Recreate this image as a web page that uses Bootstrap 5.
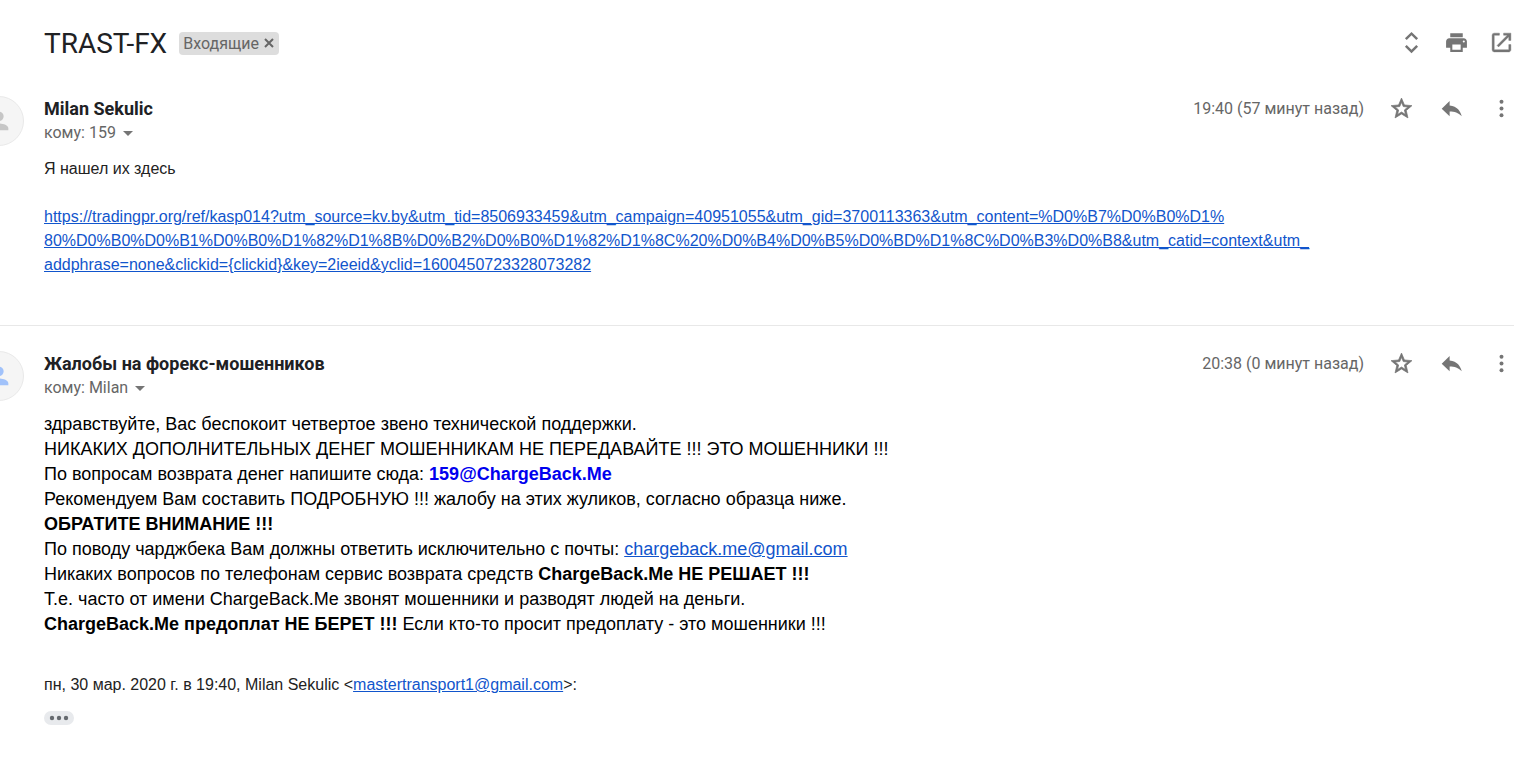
<!DOCTYPE html>
<html lang="ru">
<head>
<meta charset="utf-8">
<meta name="viewport" content="width=device-width, initial-scale=1">
<title>TRAST-FX</title>
<link href="https://cdn.jsdelivr.net/npm/bootstrap@5.3.0/dist/css/bootstrap.min.css" rel="stylesheet">
<style>
body { font-family: Roboto, "Liberation Sans", sans-serif; color: #202124; background: #fff; }
.thread { margin-left: -26px; padding-right: 18px; }
.subject-bar { padding: 24px 0 24px 70px; }
.subject { font-size: 28px; line-height: 36px; padding-top: 2px; }
.folder-tag { background: #ddd; color: #666; font-size: 16px; line-height: 23px; border-radius: 4px; padding: 0 5px 0 4px; margin-left: 12px; }
.folder-tag button { margin-left: 5px; }
.icon-btn { width: 25px; height: 25px; padding: 0; border: 0; background: none; color: #757575; display: block; }
.icon-btn svg { display: block; width: 25px; height: 25px; fill: currentColor; }
.head-tools { gap: 20px; padding-top: 6px; }
.msg-tools { gap: 25px; height: 25px; }
.message { padding: 10px 0 48px; }
.message + .message { border-top: 1px solid #e8e8e8; padding-top: 25px; }
.avatar { width: 50px; height: 50px; background: #f5f5f5; border: 1px solid #e9e9e9; color: #c6c6c6; margin-right: 20px; }
.avatar svg { width: 28px; height: 28px; fill: currentColor; }
.avatar-blue { color: #a1c2fa; }
.sender { font-size: 18px; line-height: 25px; font-weight: 700; }
.meta { font-size: 16px; line-height: 24px; color: #666; }
.caret-btn { border: 0; background: none; padding: 0; margin-left: 7px; width: 10px; height: 5px; }
.caret-btn svg { display: block; fill: #757575; }
.mail-text { font-family: "Liberation Sans", Arial, sans-serif; font-size: 16px; line-height: 24px; color: #222; }
.mail-text a { color: #15c; }
.mail-large { font-size: 18px; line-height: 25px; color: #000; }
.mail-large .contact { color: #00e; }
.quote-line { margin-top: 36px; }
.trimmed { width: 30px; height: 14px; border: 0; border-radius: 7px; background: #e8eaed; padding: 0; margin-top: 14px; }
</style>
</head>
<body class="overflow-x-hidden">
<svg class="d-none" aria-hidden="true">
<symbol id="i-star" viewBox="0 0 24 24"><path stroke="currentColor" stroke-width=".7" d="M22 9.24l-7.19-.62L12 2 9.19 8.63 2 9.24l5.46 4.73L5.82 21 12 17.27 18.18 21l-1.63-7.03L22 9.24zM12 15.4l-3.76 2.27 1-4.28-3.32-2.88 4.38-.38L12 6.1l1.71 4.04 4.38.38-3.32 2.88 1 4.28L12 15.4z"/></symbol>
<symbol id="i-reply" viewBox="0 0 24 24"><path d="M10.200 9V4.800L2.600 12.200l7.600 7.300V14.900c4.800 0 8.200 1.200 11.600 4.600C20.800 14.500 17.500 9.900 10.200 9z"/></symbol>
<symbol id="i-more" viewBox="0 0 24 24"><circle cx="12" cy="5.500" r="1.900"/><circle cx="12" cy="12" r="1.900"/><circle cx="12" cy="18.500" r="1.900"/></symbol>
<symbol id="i-person" viewBox="0 0 24 24"><path d="M12 12a4 4 0 1 0 0-8 4 4 0 0 0 0 8zm0 2c-2.670 0-8 1.340-8 4v2h16v-2c0-2.660-5.330-4-8-4z"/></symbol>
</svg>
<main class="thread">
<header class="subject-bar d-flex justify-content-between align-items-start">
  <div class="d-flex align-items-center">
    <h1 class="subject fw-normal m-0">TRAST-FX</h1>
    <div class="folder-tag d-flex align-items-center">Входящие
      <button type="button" class="btn p-0 border-0 d-flex" aria-label="Удалить ярлык"><svg width="10" height="10" viewBox="0 0 10 10" fill="none" stroke="#666" stroke-width="2"><path d="M1 1l8 8M9 1l-8 8"/></svg></button>
    </div>
  </div>
  <div class="head-tools d-flex align-items-center">
    <button type="button" class="icon-btn" aria-label="Развернуть все"><svg viewBox="0 0 24 24"><path d="M12 5.100l4.600 4.600 1.700-1.700L12 1.800 5.700 8l1.700 1.700L12 5.100zm0 13.800l-4.600-4.600L5.700 16l6.300 6.200 6.300-6.200-1.700-1.700L12 18.900z"/></svg></button>
    <button type="button" class="icon-btn" aria-label="Печать"><svg viewBox="0 0 24 24"><path d="M19 8H5c-1.660 0-3 1.340-3 3v6h4v4h12v-4h4v-6c0-1.660-1.340-3-3-3zm-3 11H8v-5h8v5zm3-7a1 1 0 1 1 0-2 1 1 0 0 1 0 2zM18 3H6v4h12V3z"/></svg></button>
    <button type="button" class="icon-btn" aria-label="В новом окне"><svg viewBox="0 0 24 24"><path stroke="currentColor" stroke-width=".4" d="M19 19H5V5h5V3H5a2 2 0 0 0-2 2v14a2 2 0 0 0 2 2h14c1.100 0 2-.900 2-2v-5h-2v5zM14 3v2h3.590l-9.830 9.830 1.410 1.410L19 6.410V10h2V3h-7z"/></svg></button>
  </div>
</header>

<article class="message d-flex">
  <div class="avatar rounded-circle d-flex align-items-center justify-content-center flex-shrink-0"><svg><use href="#i-person"/></svg></div>
  <div class="flex-grow-1">
    <div class="d-flex justify-content-between">
      <div>
        <h2 class="sender m-0">Milan Sekulic</h2>
        <div class="meta d-flex align-items-center">кому: 159<button type="button" class="caret-btn" aria-label="Показать детали"><svg width="10" height="5"><path d="M0 0h10L5 5z"/></svg></button></div>
      </div>
      <div class="msg-tools d-flex align-items-center">
        <time class="meta">19:40 (57 минут назад)</time>
        <button type="button" class="icon-btn" aria-label="Пометить"><svg><use href="#i-star"/></svg></button>
        <button type="button" class="icon-btn" aria-label="Ответить"><svg><use href="#i-reply"/></svg></button>
        <button type="button" class="icon-btn" aria-label="Ещё"><svg><use href="#i-more"/></svg></button>
      </div>
    </div>
    <div class="mail-text mt-2 pt-1">
      <p class="mb-4">Я нашел их здесь</p>
      <a href="#">https://tradingpr.org/ref/kasp014?utm_source=kv.by&amp;utm_tid=8506933459&amp;utm_campaign=40951055&amp;utm_gid=3700113363&amp;utm_content=%D0%B7%D0%B0%D1%<br>80%D0%B0%D0%B1%D0%B0%D1%82%D1%8B%D0%B2%D0%B0%D1%82%D1%8C%20%D0%B4%D0%B5%D0%BD%D1%8C%D0%B3%D0%B8&amp;utm_catid=context&amp;utm_<br>addphrase=none&amp;clickid={clickid}&amp;key=2ieeid&amp;yclid=1600450723328073282</a>
    </div>
  </div>
</article>

<article class="message d-flex">
  <div class="avatar avatar-blue rounded-circle d-flex align-items-center justify-content-center flex-shrink-0"><svg><use href="#i-person"/></svg></div>
  <div class="flex-grow-1">
    <div class="d-flex justify-content-between">
      <div>
        <h2 class="sender m-0">Жалобы на форекс-мошенников</h2>
        <div class="meta d-flex align-items-center">кому: Milan<button type="button" class="caret-btn" aria-label="Показать детали"><svg width="10" height="5"><path d="M0 0h10L5 5z"/></svg></button></div>
      </div>
      <div class="msg-tools d-flex align-items-center">
        <time class="meta">20:38 (0 минут назад)</time>
        <button type="button" class="icon-btn" aria-label="Пометить"><svg><use href="#i-star"/></svg></button>
        <button type="button" class="icon-btn" aria-label="Ответить"><svg><use href="#i-reply"/></svg></button>
        <button type="button" class="icon-btn" aria-label="Ещё"><svg><use href="#i-more"/></svg></button>
      </div>
    </div>
    <div class="mail-text mail-large mt-2 pt-1">
      здравствуйте, Вас беспокоит четвертое звено технической поддержки.<br>
      НИКАКИХ ДОПОЛНИТЕЛЬНЫХ ДЕНЕГ МОШЕННИКАМ НЕ ПЕРЕДАВАЙТЕ !!! ЭТО МОШЕННИКИ !!!<br>
      По вопросам возврата денег напишите сюда: <b class="contact">159@ChargeBack.Me</b><br>
      Рекомендуем Вам составить ПОДРОБНУЮ !!! жалобу на этих жуликов, согласно образца ниже.<br>
      <b>ОБРАТИТЕ ВНИМАНИЕ !!!</b><br>
      По поводу чарджбека Вам должны ответить исключительно с почты: <a href="mailto:chargeback.me@gmail.com">chargeback.me@gmail.com</a><br>
      Никаких вопросов по телефонам сервис возврата средств <b>ChargeBack.Me НЕ РЕШАЕТ !!!</b><br>
      Т.е. часто от имени ChargeBack.Me звонят мошенники и разводят людей на деньги.<br>
      <b>ChargeBack.Me предоплат НЕ БЕРЕТ !!!</b> Если кто-то просит предоплату - это мошенники !!!
    </div>
    <div class="mail-text quote-line">пн, 30 мар. 2020 г. в 19:40, Milan Sekulic &lt;<a href="mailto:mastertransport1@gmail.com">mastertransport1@gmail.com</a>&gt;:</div>
    <button type="button" class="trimmed d-flex align-items-center justify-content-center" aria-label="Показать скрытый текст"><svg width="20" height="6" fill="#666a6f"><circle cx="3" cy="3" r="2.200"/><circle cx="10" cy="3" r="2.200"/><circle cx="17" cy="3" r="2.200"/></svg></button>
  </div>
</article>
</main>
<script src="https://cdn.jsdelivr.net/npm/bootstrap@5.3.0/dist/js/bootstrap.bundle.min.js"></script>
</body>
</html>
